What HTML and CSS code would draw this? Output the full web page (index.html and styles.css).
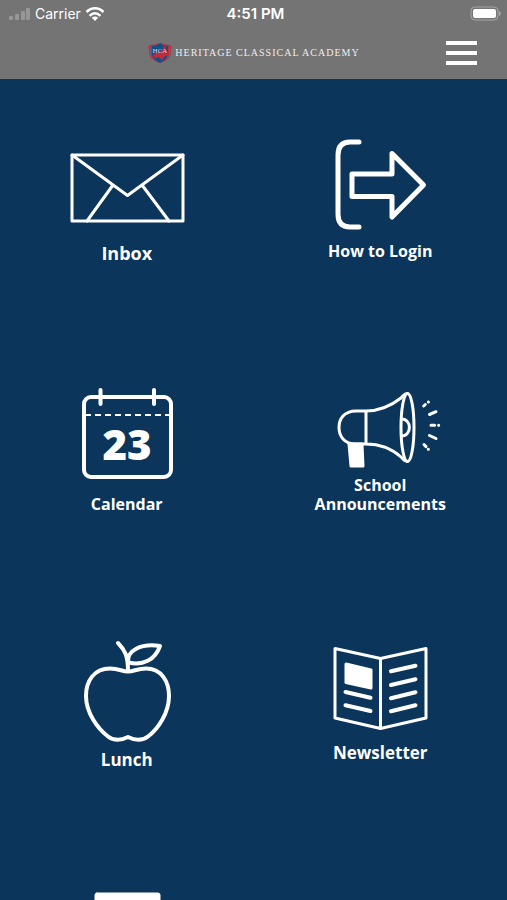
FILE: index.html
```html
<!DOCTYPE html>
<html lang="en">
<head>
<meta charset="utf-8">
<meta name="viewport" content="width=device-width, initial-scale=1">
<title>Heritage Classical Academy</title>
<link rel="stylesheet" href="styles.css">
</head>
<body>
<header class="header">
  <div class="status">
    <div class="status-left">
      <svg class="signal" width="22" height="14" viewBox="0 0 22 14" aria-hidden="true">
        <rect x="0" y="9" width="4" height="4" rx="1"/><rect x="6" y="7" width="4" height="6" rx="1"/><rect x="12" y="4" width="4" height="9" rx="1"/><rect x="17" y="1" width="4" height="12" rx="1"/>
      </svg>
      <span>Carrier</span>
      <svg width="20" height="14" viewBox="0 0 20 14" aria-hidden="true">
        <path class="wifi" d="M1.500 5C6.500 0 13.500 0 18.500 5M4.600 8.800C8 5.600 12 5.600 15.400 8.800"/>
        <path class="solid" d="M6.800 10.700C8.800 9 11.200 9 13.200 10.700L10 14Z"/>
      </svg>
    </div>
    <time class="clock">4:51 PM</time>
    <div class="status-right">
      <svg width="32" height="16" viewBox="0 0 32 16" aria-hidden="true">
        <rect class="battery" x="1" y="1" width="27" height="13" rx="4"/>
        <rect class="solid" x="3" y="3" width="23" height="9" rx="2"/>
        <path class="battery-tip" d="M29 5Q33 7.500 29 10Z"/>
      </svg>
    </div>
  </div>
  <div class="nav">
    <a class="brand" href="#">
      <svg width="26" height="22" viewBox="0 0 26 22" aria-hidden="true">
        <path class="crest-red" d="M3 3Q8 3 13 1Q18 3 23 3L25 5Q23 9 24 12Q23 18 13 21Q3 18 2 12Q3 9 1 5Z"/>
        <path class="crest-ring" d="M3 5Q4 9 3 12Q5 17 13 19Q21 17 23 12Q22 9 23 5"/>
        <path class="crest-blue" d="M5 4Q10 4 13 1Q16 4 21 4V12Q20 18 13 21Q6 18 5 12Z"/>
        <path class="crest-red" d="M6 13L15 8L18 3L21 13L17 15L15 18L12 15L8 16Z"/>
        <text class="crest-text" x="13" y="11" text-anchor="middle">HCA</text>
      </svg>
      <span class="wordmark">HERITAGE CLASSICAL ACADEMY</span>
    </a>
    <button class="menu" type="button" aria-label="Menu"><span></span><span></span><span></span></button>
  </div>
</header>
<main class="tiles">
  <a class="tile" href="#">
    <svg class="icon thin" width="140" height="112" viewBox="0 0 140 112" aria-hidden="true">
      <rect x="15" y="24" width="111" height="66"/>
      <path d="M15 24L70.500 64.500L126 24M56 54L30 90M85 54L112 90"/>
    </svg>
    <span class="label larger">Inbox</span>
  </a>
  <a class="tile" href="#">
    <svg class="icon bold" width="140" height="110" viewBox="0 0 140 110" aria-hidden="true">
      <path d="M49 11H40Q28 11 28 24V83Q28 96 40 96H49M42 43H82V22.500L113.500 54L82 86V65.500H42Z"/>
    </svg>
    <span class="label">How to Login</span>
  </a>
  <a class="tile" href="#">
    <svg class="icon medium" width="140" height="111" viewBox="0 0 140 111" aria-hidden="true">
      <rect x="27" y="14" width="87" height="80" rx="7"/>
      <path d="M43.500 7V21M97 7V21"/>
      <path class="dashes" d="M28 32H114"/>
      <text class="date" x="70" y="77" text-anchor="middle">23</text>
    </svg>
    <span class="label">Calendar</span>
  </a>
  <a class="tile" href="#">
    <svg class="icon thin" width="140" height="93" viewBox="0 0 140 93" aria-hidden="true">
      <path d="M56 28H46C34 28 29 36 29 44.500C29 53 34 61 46 61H56ZM56 28C70 28 82 22 91 15C94 12 94 10.500 97.500 10.500M56 61C70 61 82 66 91 74C94 77 94 78.500 97.500 78.500"/>
      <ellipse cx="97.500" cy="44.500" rx="6.500" ry="34"/>
      <path d="M91.500 36C102 36 102 53 91.500 53"/>
      <path class="solid" d="M39 61H52L53 83H41Z"/>
      <path d="M113.700 23L115.300 21.500M118.300 19H118.400M119.500 31.500L126 28.700M121 42.300H124.600M128.600 42.300H128.700M119.500 52.500L126 55.500M114 61.500L116 63.600M118.300 66.300H118.400"/>
    </svg>
    <span class="label tight">School<br>Announcements</span>
  </a>
  <a class="tile" href="#">
    <svg class="icon medium" width="140" height="115" viewBox="0 0 140 115" aria-hidden="true">
      <path d="M61 8C68 15 71 21 71 36M71.500 27.500C69 16 84 8 103 11C98 25 86 31 71.500 27.500"/>
      <path d="M71 36.500C65 36.500 62 33.500 53 33.500C37 33.500 29 46 29 61C29 78 41 94 51 101.500C58 107 65 105 71 102C77 105 84 107 91 101.500C101 94 112 78 112 61C112 46 104 33.500 89 33.500C80 33.500 77 36.500 71 36.500Z"/>
    </svg>
    <span class="label large">Lunch</span>
  </a>
  <a class="tile" href="#">
    <svg class="icon thin" width="140" height="108" viewBox="0 0 140 108" aria-hidden="true">
      <path d="M25 13.500L70.500 23.500L116 13.500V83L70.500 93.500L25 83ZM70.500 23.500V93.500"/>
      <path class="solid" d="M36 29L61 35V53L36 47.500Z"/>
      <path class="lines" d="M35.500 57L60.500 62.700M35.500 70.300L60.500 76M81 36.300L105.500 30.700M81 50L105.500 44.300M81 63.300L105.500 57.300M81 76.300L105.500 70.300"/>
    </svg>
    <span class="label large">Newsletter</span>
  </a>
  <a class="tile" href="#" aria-label="More">
    <svg class="icon" width="140" height="112" viewBox="0 0 140 112" aria-hidden="true">
      <rect class="solid" x="38" y="6" width="65" height="90" rx="2"/>
    </svg>
  </a>
</main>
</body>
</html>
```
FILE: styles.css
```css
* {
  box-sizing: border-box;
}

body {
  margin: 0;
  height: 100vh;
  display: flex;
  flex-direction: column;
  background: #0b355a;
  color: #fff;
  font-family: "Open Sans", "Noto Sans", sans-serif;
}

a {
  color: inherit;
  text-decoration: none;
}

.header {
  flex: none;
  background: #747474;
}

.status {
  display: grid;
  grid-template-columns: 1fr auto 1fr;
  align-items: center;
  height: 27px;
  padding: 0 5px 0 9px;
  font: 14px/20px Inter, sans-serif;
}

.status-left {
  display: flex;
  align-items: center;
  gap: 4px;
}

.status-right {
  display: flex;
  justify-content: flex-end;
}

.clock {
  font-size: 15px;
  font-weight: 600;
}

.signal {
  fill: #979797;
}

.wifi {
  fill: none;
  stroke: #fff;
  stroke-width: 2.5;
}

.solid {
  fill: #fff;
}

.battery {
  fill: none;
  stroke: #a6a6a6;
  stroke-width: 1;
}

.battery-tip {
  fill: #a6a6a6;
}

.nav {
  display: grid;
  grid-template-columns: 1fr auto 1fr;
  align-items: center;
  height: 52px;
  padding: 0 30px;
}

.brand {
  grid-column: 2;
  display: flex;
  align-items: center;
  gap: 2px;
}

.wordmark {
  color: #eee;
  font: 10px/16px "Liberation Serif", serif;
  letter-spacing: 1px;
  white-space: nowrap;
}

.crest-red {
  fill: #bd2d3c;
}

.crest-blue {
  fill: #12508a;
}

.crest-ring {
  fill: none;
  stroke: #65668a;
}

.crest-text {
  fill: #c9d5e4;
  font: 7px "Liberation Serif", serif;
}

.menu {
  justify-self: end;
  display: flex;
  flex-direction: column;
  gap: 6px;
  width: 31px;
  padding: 0;
  border: 0;
  background: none;
}

.menu span {
  height: 4px;
  background: #fff;
}

.tiles {
  flex: 1;
  min-height: 0;
  overflow-y: auto;
  scrollbar-width: none;
  display: grid;
  grid-template-columns: 1fr 1fr;
  grid-auto-rows: 252px;
}

.tile {
  display: flex;
  flex-direction: column;
  align-items: center;
  padding-top: 52px;
}

.icon {
  flex: none;
  fill: none;
  stroke: #fff;
  stroke-linecap: round;
  stroke-linejoin: round;
}

.thin {
  stroke-width: 3;
}

.medium {
  stroke-width: 4;
}

.bold {
  stroke-width: 5;
}

.dashes {
  stroke-width: 2;
  stroke-linecap: butt;
  stroke-dasharray: 6 4;
}

.lines {
  stroke-width: 4;
}

.date {
  fill: #fff;
  stroke: none;
  font-size: 42px;
  font-weight: 800;
}

.label {
  font-size: 16px;
  font-weight: 700;
  line-height: 20px;
  text-align: center;
}

.large {
  font-size: 17px;
}

.larger {
  font-size: 18px;
}

.tight {
  line-height: 19px;
}
```
